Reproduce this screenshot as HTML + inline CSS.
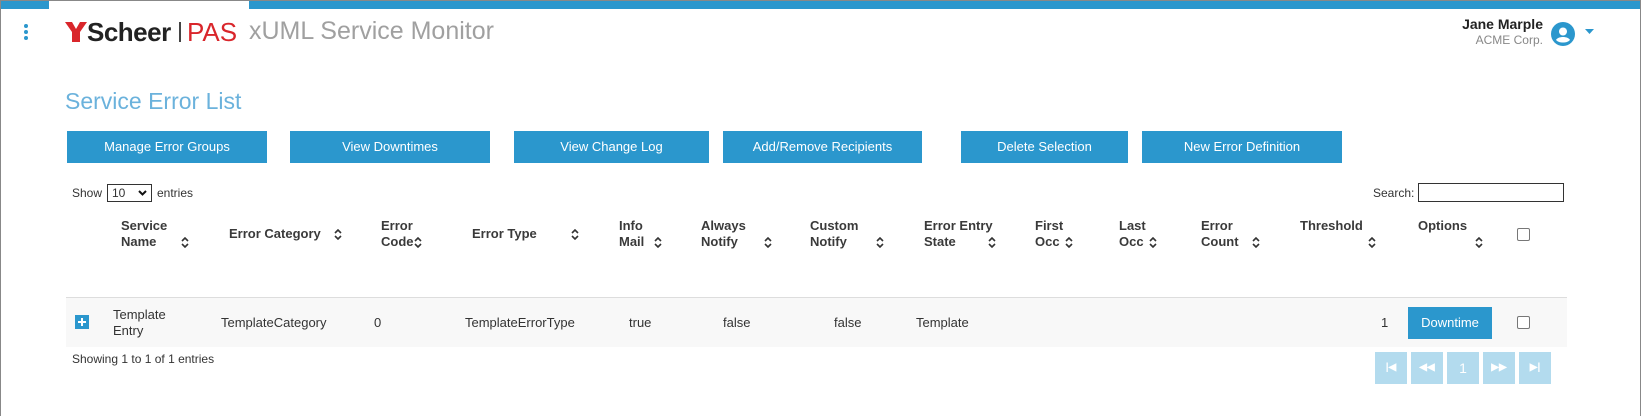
<!DOCTYPE html>
<html><head><meta charset="utf-8"><style>
*{margin:0;padding:0;box-sizing:border-box}
body{width:1641px;height:416px;background:#fff;position:relative;overflow:hidden;font-family:"Liberation Sans",sans-serif;color:#333;font-size:13px}
.a{position:absolute;white-space:nowrap}
.btn{position:absolute;top:131px;height:32px;background:#2b97cd;color:#fff;font-size:13px;text-align:center;line-height:32px}
.h{position:absolute;top:218px;font-weight:bold;font-size:13px;line-height:16px;color:#3a3a3a}
.s{position:absolute;top:237px;width:8px;height:11px}
.r{position:absolute;font-size:13px;top:315px}
.pg{position:absolute;top:352px;width:32px;height:32px;background:#b3dbee;color:#fff;text-align:center;line-height:32px;font-size:10px;font-weight:bold}
.cb{position:absolute;width:13px;height:13px;border:1.5px solid #777;border-radius:2px;background:#fff}
</style></head><body>
<svg width="0" height="0" style="position:absolute"><defs><symbol id="srt" viewBox="0 0 8 11"><path d="M1 4l3-3 3 3M1 7l3 3 3-3" fill="none" stroke="#333" stroke-width="1.6"/></symbol></defs></svg>
<div class="a" style="left:0;top:0;width:1641px;height:1px;background:#888"></div>
<div class="a" style="left:0;top:0;width:1px;height:416px;background:#888"></div>
<div class="a" style="left:1640px;top:0;width:1px;height:416px;background:#888"></div>
<div class="a" style="left:1px;top:1px;width:1639px;height:8px;background:#2b97cd"></div>
<div class="a" style="left:49px;top:1px;width:200px;height:8px;background:#fff"></div>
<div class="a" style="left:24px;top:24px;width:4px;height:4px;border-radius:2px;background:#2b97cd"></div>
<div class="a" style="left:24px;top:30px;width:4px;height:4px;border-radius:2px;background:#2b97cd"></div>
<div class="a" style="left:24px;top:36px;width:4px;height:4px;border-radius:2px;background:#2b97cd"></div>
<svg class="a" style="left:65px;top:22px" width="22" height="20" viewBox="0 0 22 20"><path d="M0 0h7l4 7 4-7h7l-7 10v10h-8V10z" fill="#d9262b"/></svg>
<div class="a" style="left:87px;top:17px;font-size:26px;font-weight:bold;color:#222;letter-spacing:-0.5px">Scheer</div>
<div class="a" style="left:179px;top:22px;width:2px;height:20px;background:#444"></div>
<div class="a" style="left:187px;top:17px;font-size:26px;color:#d9262b">PAS</div>
<div class="a" style="left:249px;top:17px;font-size:25px;color:#a0a0a0;font-weight:300">xUML Service Monitor</div>
<div class="a" style="right:98px;top:16px;font-size:14px;font-weight:bold;color:#222">Jane Marple</div>
<div class="a" style="right:98px;top:33px;font-size:12px;color:#888">ACME Corp.</div>
<svg class="a" style="left:1551px;top:22px" width="24" height="24" viewBox="0 0 24 24"><circle cx="12" cy="12" r="12" fill="#2b97cd"/><circle cx="12" cy="9.5" r="4" fill="#fff"/><path d="M5 18c2-4 12-4 14 0c-2 2-4 2.5-7 2.5S7 20 5 18z" fill="#fff"/></svg>
<svg class="a" style="left:1585px;top:29px" width="9" height="6"><path d="M0 0h9L4.5 5z" fill="#2b97cd"/></svg>
<div class="a" style="left:65px;top:88px;font-size:23px;color:#6bb2dc;font-weight:300">Service Error List</div>
<div class="btn" style="left:67px;width:200px">Manage Error Groups</div>
<div class="btn" style="left:290px;width:200px">View Downtimes</div>
<div class="btn" style="left:514px;width:195px">View Change Log</div>
<div class="btn" style="left:723px;width:199px">Add/Remove Recipients</div>
<div class="btn" style="left:961px;width:167px">Delete Selection</div>
<div class="btn" style="left:1142px;width:200px">New Error Definition</div>
<div class="a" style="left:72px;top:186px;font-size:12px">Show</div>
<div class="a" style="left:107px;top:184px;width:45px;height:18px;border:1px solid #333;font-size:12px;padding-left:4px;line-height:16px">10</div>
<svg class="a" style="left:138px;top:190px" width="9" height="6"><path d="M1 1l3.5 3.5L8 1" fill="none" stroke="#111" stroke-width="2"/></svg>
<div class="a" style="left:157px;top:186px;font-size:12px">entries</div>
<div class="a" style="left:1373px;top:186px;font-size:12px">Search:</div>
<div class="a" style="left:1418px;top:183px;width:146px;height:19px;border:1px solid #333"></div>
<div class="h" style="left:121px">Service<br>Name</div><svg class="s" style="left:181px"><use href="#srt"/></svg>
<div class="h" style="left:229px;top:226px">Error Category</div><svg class="s" style="left:334px;top:229px"><use href="#srt"/></svg>
<div class="h" style="left:381px">Error<br>Code</div><svg class="s" style="left:414px"><use href="#srt"/></svg>
<div class="h" style="left:472px;top:226px">Error Type</div><svg class="s" style="left:571px;top:229px"><use href="#srt"/></svg>
<div class="h" style="left:619px">Info<br>Mail</div><svg class="s" style="left:654px"><use href="#srt"/></svg>
<div class="h" style="left:701px">Always<br>Notify</div><svg class="s" style="left:764px"><use href="#srt"/></svg>
<div class="h" style="left:810px">Custom<br>Notify</div><svg class="s" style="left:876px"><use href="#srt"/></svg>
<div class="h" style="left:924px">Error Entry<br>State</div><svg class="s" style="left:988px"><use href="#srt"/></svg>
<div class="h" style="left:1035px">First<br>Occ</div><svg class="s" style="left:1065px"><use href="#srt"/></svg>
<div class="h" style="left:1119px">Last<br>Occ</div><svg class="s" style="left:1149px"><use href="#srt"/></svg>
<div class="h" style="left:1201px">Error<br>Count</div><svg class="s" style="left:1252px"><use href="#srt"/></svg>
<div class="h" style="left:1300px">Threshold</div><svg class="s" style="left:1368px"><use href="#srt"/></svg>
<div class="h" style="left:1418px">Options</div><svg class="s" style="left:1475px"><use href="#srt"/></svg>
<div class="cb" style="left:1517px;top:228px"></div>
<div class="a" style="left:66px;top:297px;width:1501px;height:1px;background:#ddd"></div>
<div class="a" style="left:66px;top:298px;width:1501px;height:49px;background:#f8f8f8"></div>
<div class="a" style="left:75px;top:315px;width:14px;height:14px;background:#2b97cd"></div>
<svg class="a" style="left:75px;top:315px" width="14" height="14"><path d="M7 3v8M3 7h8" stroke="#fff" stroke-width="2"/></svg>
<div class="r" style="left:113px;top:307px;line-height:16px">Template<br>Entry</div>
<div class="r" style="left:221px">TemplateCategory</div>
<div class="r" style="left:374px">0</div>
<div class="r" style="left:465px">TemplateErrorType</div>
<div class="r" style="left:629px">true</div>
<div class="r" style="left:723px">false</div>
<div class="r" style="left:834px">false</div>
<div class="r" style="left:916px">Template</div>
<div class="r" style="left:1381px">1</div>
<div class="a" style="left:1408px;top:307px;width:84px;height:32px;background:#2b97cd;color:#fff;font-size:13px;line-height:32px;text-align:center">Downtime</div>
<div class="cb" style="left:1517px;top:316px"></div>
<div class="a" style="left:72px;top:352px;font-size:12px">Showing 1 to 1 of 1 entries</div>
<div class="pg" style="left:1375px">|◀</div>
<div class="pg" style="left:1411px">◀◀</div>
<div class="pg" style="left:1447px;font-size:14px;font-weight:normal">1</div>
<div class="pg" style="left:1483px">▶▶</div>
<div class="pg" style="left:1519px">▶|</div>
</body></html>
